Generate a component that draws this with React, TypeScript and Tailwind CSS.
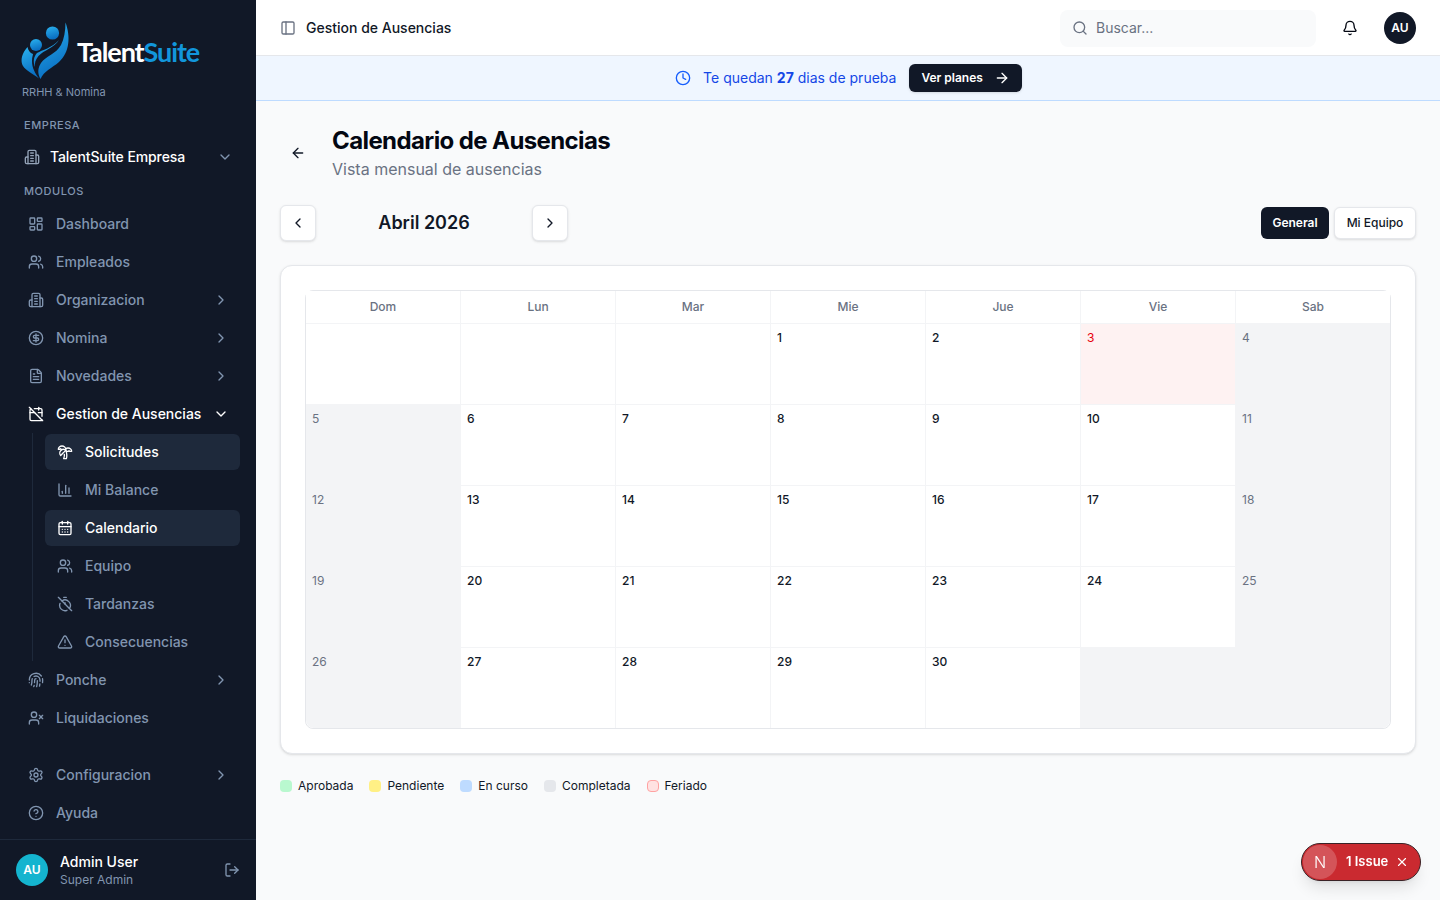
import React from "react";
import {
  ArrowLeft, ArrowRight, Bell, CalendarDays, CalendarOff, ChartColumn, ChevronDown, ChevronLeft, ChevronRight,
  CircleDollarSign, CircleHelp, Clock, FileText, Fingerprint, LayoutDashboard, LogOut, PanelLeft, Search, Settings,
  TimerOff, TreePalm, TriangleAlert, Users, UserX, X,
} from "lucide-react";

const Building = ({ className }: { className?: string }) => (
  <svg viewBox="0 0 24 24" fill="none" stroke="currentColor" strokeWidth={2} strokeLinecap="round" strokeLinejoin="round" className={className}>
    <path d="M6 22V4a2 2 0 0 1 2-2h8a2 2 0 0 1 2 2v18Z" />
    <path d="M6 12H4a2 2 0 0 0-2 2v6a2 2 0 0 0 2 2h2" />
    <path d="M18 9h2a2 2 0 0 1 2 2v9a2 2 0 0 1-2 2h-2" />
    <path d="M10 6h4" />
    <path d="M10 10h4" />
    <path d="M10 14h4" />
    <path d="M10 18h4" />
  </svg>
);

const Row = ({ icon: Icon, label, chevron, active }: { icon: any; label: string; chevron?: boolean; active?: boolean }) => (
  <div className={`flex h-[38px] items-center gap-3 pl-[28px] pr-[27px] text-sm font-medium ${active ? "text-white" : "text-[#8195b0]"}`}>
    <Icon className="h-4 w-4 shrink-0" />
    <span className="min-w-0 flex-1 whitespace-nowrap">{label}</span>
    {chevron && (active ? <ChevronDown className="h-4 w-4 shrink-0" /> : <ChevronRight className="h-4 w-4 shrink-0" />)}
  </div>
);

const Sub = ({ icon: Icon, label, active }: { icon: any; label: string; active?: boolean }) => (
  <div className="flex h-[38px] items-center">
    <div className={`flex h-9 w-full items-center gap-3 rounded-md px-3 text-sm font-medium ${active ? "bg-[#1e293b] text-white" : "text-[#8195b0]"}`}>
      <Icon className="h-4 w-4 shrink-0" />
      <span>{label}</span>
    </div>
  </div>
);

const Logo = () => (
  <div className="flex h-[60px] items-center pl-5">
    <svg viewBox="20 20 52 60" className="h-[60px] w-[52px] shrink-0">
      <defs>
        <linearGradient id="lg" x1="0" y1="0" x2="0.3" y2="1">
          <stop offset="0" stopColor="#2bb3f0" />
          <stop offset="1" stopColor="#0a6fc2" />
        </linearGradient>
      </defs>
      <circle cx="52.5" cy="33" r="6.6" fill="url(#lg)" />
      <circle cx="36" cy="45" r="6" fill="url(#lg)" />
      <path d="M65.5 22.5C70.5 36 70 52 59 62C52 68 44 71 40.5 79C37.5 74 37.5 68 41 63C46 56 56 54 61 45C64 39 65.5 31 65.5 22.5Z" fill="url(#lg)" />
      <path d="M59 40C54 48 44 50 38.5 56C35.5 59.5 34.5 63 35 67C33 62 33.5 57 37 53C42 50 52 48 59 40Z" fill="url(#lg)" />
      <path d="M27.5 47C23 52 19.5 60 23 66C26 71 33 73.5 39 78.5C35 73 32 68 32 61C32 57 33 55 33 54C30 53 28 50 27.5 47Z" fill="url(#lg)" />
    </svg>
    <div className="ml-[5px] pt-[2px] font-['Lato',sans-serif] text-[27px] font-bold leading-none tracking-[-1.1px]">
      <span className="text-white">Talent</span>
      <span className="text-[#1296db]">Suite</span>
    </div>
  </div>
);

const Sidebar = () => (
  <aside className="flex h-screen w-64 shrink-0 flex-col bg-[#111827]">
    <div className="h-[117px] pt-5">
      <Logo />
      <div className="mt-1 h-4 pl-[22px] text-[11px] leading-4 text-[#8195b0]">RRHH &amp; Nomina</div>
    </div>
    <div className="h-4 pl-6 text-[11px] font-medium uppercase leading-4 tracking-wider text-[#8195b0]">Empresa</div>
    <div className="mt-[5px] flex h-[38px] items-center gap-[10px] pl-6 pr-[23px] text-sm font-medium tracking-[-0.1px] text-white">
      <Building className="h-4 w-4 shrink-0 text-[#94a3b8]" />
      <span className="flex-1">TalentSuite Empresa</span>
      <ChevronDown className="h-4 w-4 text-[#8195b0]" />
    </div>
    <div className="mt-[7px] h-4 pl-6 text-[11px] font-medium uppercase leading-4 tracking-wider text-[#8195b0]">Modulos</div>
    <nav className="mt-[6px]">
      <Row icon={LayoutDashboard} label="Dashboard" />
      <Row icon={Users} label="Empleados" />
      <Row icon={Building} label="Organizacion" chevron />
      <Row icon={CircleDollarSign} label="Nomina" chevron />
      <Row icon={FileText} label="Novedades" chevron />
      <Row icon={CalendarOff} label="Gestion de Ausencias" chevron active />
      <div className="ml-8 mr-4 border-l border-[#1e293b] pl-3">
        <Sub icon={TreePalm} label="Solicitudes" active />
        <Sub icon={ChartColumn} label="Mi Balance" />
        <Sub icon={CalendarDays} label="Calendario" active />
        <Sub icon={Users} label="Equipo" />
        <Sub icon={TimerOff} label="Tardanzas" />
        <Sub icon={TriangleAlert} label="Consecuencias" />
      </div>
      <Row icon={Fingerprint} label="Ponche" chevron />
      <Row icon={UserX} label="Liquidaciones" />
    </nav>
    <div className="mt-auto pb-[7px]">
      <Row icon={Settings} label="Configuracion" chevron />
      <Row icon={CircleHelp} label="Ayuda" />
    </div>
    <div className="flex h-[61px] items-center border-t border-[#1e293b] pl-4 pr-4">
      <div className="flex h-8 w-8 items-center justify-center rounded-full bg-[#14b4cf] text-xs font-semibold text-white">AU</div>
      <div className="ml-3 flex-1">
        <div className="text-sm font-medium leading-5 text-white">Admin User</div>
        <div className="text-xs leading-4 text-[#8195b0]">Super Admin</div>
      </div>
      <LogOut className="h-4 w-4 text-[#8195b0]" />
    </div>
  </aside>
);

const Header = () => (
  <header className="flex h-14 shrink-0 items-center border-b border-gray-200 bg-white pl-6 pr-6">
    <PanelLeft className="h-4 w-4 text-gray-500" />
    <span className="ml-[10px] text-sm font-medium text-[#111827]">Gestion de Ausencias</span>
    <div className="ml-auto mt-[1px] flex h-[37px] w-64 items-center gap-2 rounded-lg bg-gray-50 pl-3 text-sm text-gray-500">
      <Search className="h-4 w-4 shrink-0" />
      <span>Buscar...</span>
    </div>
    <Bell className="ml-[26px] h-4 w-4 text-[#030712]" />
    <div className="ml-[26px] flex h-8 w-8 items-center justify-center rounded-full bg-[#111827] text-xs font-semibold text-white">AU</div>
  </header>
);

const Banner = () => (
  <div className="flex h-[45px] shrink-0 items-center justify-center border-b border-blue-200 bg-blue-50 pl-px text-sm text-blue-700">
    <Clock className="h-4 w-4 text-blue-600" />
    <span className="ml-3">Te quedan <span className="font-bold">27</span> dias de prueba</span>
    <div className="ml-[13px] flex h-7 items-center gap-[11px] rounded-md bg-[#111827] pl-3 pr-3 text-xs font-semibold text-white shadow-sm">
      Ver planes
      <ArrowRight className="h-4 w-4" />
    </div>
  </div>
);

const days = ["Dom", "Lun", "Mar", "Mie", "Jue", "Vie", "Sab"];
const cells: (number | null)[] = [
  null, null, null, 1, 2, 3, 4, 5, 6, 7, 8, 9, 10, 11, 12, 13, 14, 15, 16, 17, 18, 19, 20, 21, 22, 23, 24, 25,
  26, 27, 28, 29, 30, null, null,
];

const Calendar = () => (
  <div className="rounded-xl border border-gray-200 bg-white p-6 shadow-sm">
    <div className="rounded-lg border border-gray-200">
      <div className="grid grid-cols-[repeat(6,155px)_1fr]">
        {days.map((d, i) => (
          <div key={d} className={`flex h-[33px] items-center justify-center border-b border-gray-100 bg-white text-xs font-medium text-gray-500 ${i < 6 ? "border-r" : ""}`}>{d}</div>
        ))}
      </div>
      <div className="grid grid-cols-[repeat(6,155px)_1fr]">
        {cells.map((n, i) => {
          const col = i % 7;
          const last = i >= 28;
          const weekend = (col === 0 || col === 6) && n !== null;
          const gray = weekend || (last && n === null);
          const holiday = n === 3;
          return (
            <div
              key={i}
              className={`p-[6px] text-xs ${last ? "h-[80px]" : "h-[81px] border-b"} border-gray-100 ${col < 6 && !gray ? "border-r" : ""} ${
                holiday ? "bg-red-50 text-red-600" : gray ? "bg-gray-100 text-gray-500" : "bg-white font-medium text-[#111827]"
              } ${i === 28 ? "rounded-bl-lg" : ""} ${i === 34 ? "rounded-br-lg" : ""}`}
            >
              {n !== null && <span className="block leading-4">{n}</span>}
            </div>
          );
        })}
      </div>
    </div>
  </div>
);

const Legend = ({ cls, label }: { cls: string; label: string }) => (
  <div className="flex items-center gap-[6px]">
    <span className={`h-3 w-3 rounded ${cls}`} />
    <span className="text-xs text-[#111827]">{label}</span>
  </div>
);

const Main = () => (
  <main className="flex flex-1 flex-col gap-6 overflow-hidden bg-[#f9fafb] p-6">
    <div className="flex items-center gap-4">
      <div className="flex h-9 w-9 items-center justify-center"><ArrowLeft className="h-4 w-4 text-[#111827]" /></div>
      <div>
        <h1 className="text-2xl font-bold leading-8 tracking-tight text-[#030712]">Calendario de Ausencias</h1>
        <p className="text-base leading-6 text-gray-500">Vista mensual de ausencias</p>
      </div>
    </div>
    <div className="flex items-center">
      <div className="flex h-9 w-9 items-center justify-center rounded-md border border-gray-200 bg-white shadow-sm"><ChevronLeft className="h-4 w-4 text-[#111827]" /></div>
      <div className="mx-3 w-48 text-center text-lg font-semibold text-[#111827]">Abril 2026</div>
      <div className="flex h-9 w-9 items-center justify-center rounded-md border border-gray-200 bg-white shadow-sm"><ChevronRight className="h-4 w-4 text-[#111827]" /></div>
      <div className="ml-auto flex h-8 items-center gap-[5px] text-xs font-medium">
        <div className="flex h-8 w-[68px] items-center justify-center rounded-md bg-[#111827] font-semibold text-white">General</div>
        <div className="flex h-8 w-[82px] items-center justify-center rounded-md border border-gray-200 bg-white text-[#111827] shadow-sm">Mi Equipo</div>
      </div>
    </div>
    <Calendar />
    <div className="flex h-4 items-center gap-4">
      <Legend cls="bg-green-200" label="Aprobada" />
      <Legend cls="bg-yellow-200" label="Pendiente" />
      <Legend cls="bg-blue-200" label="En curso" />
      <Legend cls="bg-gray-200" label="Completada" />
      <Legend cls="border border-red-300 bg-red-100" label="Feriado" />
    </div>
  </main>
);

const Toast = () => (
  <div className="fixed left-[1301px] top-[843px] flex h-[38px] w-[120px] items-center rounded-full border border-[#3a2226] bg-[#ca2a30] pl-[1px] text-white shadow-lg">
    <div className="flex h-[34px] w-[34px] items-center justify-center rounded-full bg-white/20 text-[16px] font-light">N</div>
    <span className="ml-[9px] whitespace-nowrap text-[13px] font-semibold">1 Issue</span>
    <X className="ml-[7px] h-[14px] w-[14px]" />
  </div>
);

export default function App() {
  return (
    <div className="flex h-screen overflow-hidden font-['Inter',sans-serif]">
      <Sidebar />
      <div className="flex min-w-0 flex-1 flex-col">
        <Header />
        <Banner />
        <Main />
      </div>
      <Toast />
    </div>
  );
}
